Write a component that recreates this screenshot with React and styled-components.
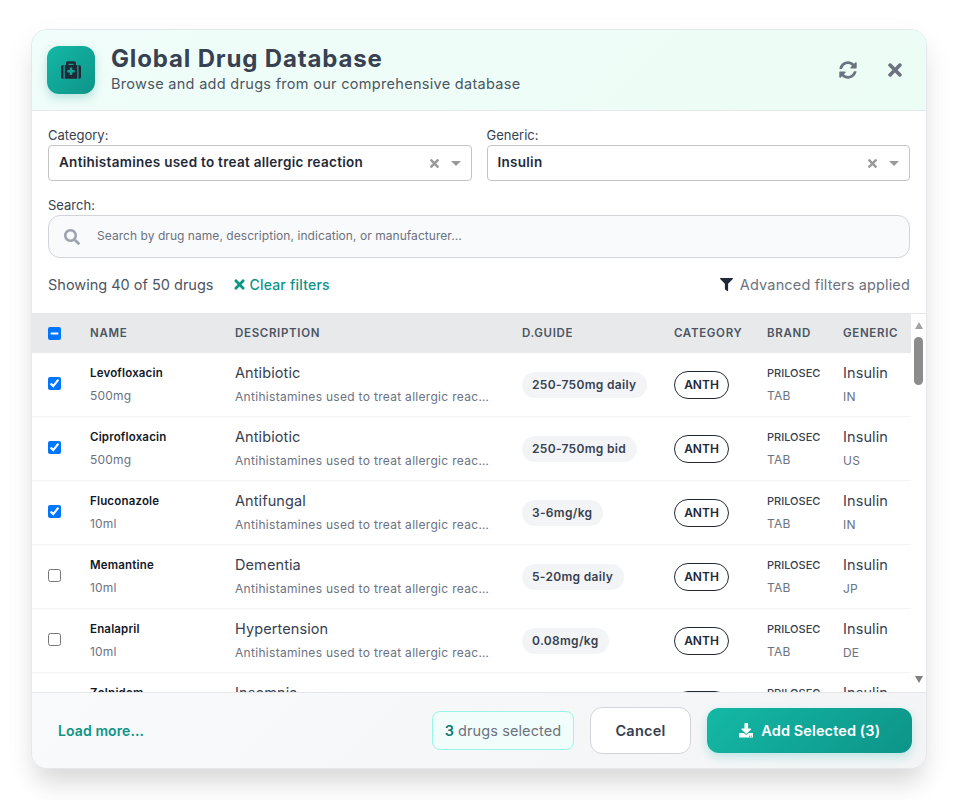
import React, { useEffect, useRef } from "react";
import styled, { createGlobalStyle } from "styled-components";
import { FaMedkit, FaSyncAlt, FaTimes, FaSearch, FaFilter, FaDownload } from "react-icons/fa";

const GlobalStyle = createGlobalStyle`
  * { box-sizing: border-box; }
  body {
    margin: 0;
    background: #fff;
    font-family: Inter, "Liberation Sans", sans-serif;
  }
`;

const Page = styled.div`
  padding: 29px 31px 32px;
`;

const Modal = styled.div`
  height: 740px;
  display: flex;
  flex-direction: column;
  background: #fff;
  border: 1px solid #e5e7eb;
  border-radius: 16px;
  box-shadow: 0 20px 25px -5px rgba(0, 0, 0, 0.1), 0 10px 30px rgba(0, 0, 0, 0.06);
  overflow: hidden;
`;

const Header = styled.div`
  height: 81px;
  flex: none;
  display: flex;
  align-items: center;
  padding: 0 21px 0 15px;
  background: linear-gradient(135deg, #f0fdfa, #ecfdf5);
  border-bottom: 1px solid #e5e7eb;
`;

const IconBox = styled.div`
  width: 48px;
  height: 48px;
  display: flex;
  align-items: center;
  justify-content: center;
  border-radius: 12px;
  color: #1f2937;
  font-size: 20px;
  background: linear-gradient(135deg, #14b8a6, #0d9488);
  box-shadow: 0 4px 10px rgba(13, 148, 136, 0.25);
`;

const HeaderText = styled.div`
  margin-left: 16px;
  padding-bottom: 2px;
  flex: 1;
`;

const Title = styled.h1`
  margin: 0;
  font-size: 24px;
  line-height: 30px;
  font-weight: 700;
  letter-spacing: 0.85px;
  color: #374151;
`;

const Subtitle = styled.p`
  margin: 0;
  font-size: 14.5px;
  line-height: 20px;
  letter-spacing: 0.3px;
  color: #4b5563;
`;

const HeaderButton = styled.button`
  border: none;
  background: none;
  padding: 0;
  margin-left: ${(p) => p.$gap}px;
  display: flex;
  color: #6b7280;
  font-size: ${(p) => p.$size}px;
`;

const Filters = styled.div`
  flex: none;
  padding: 16px 16px 0;
`;

const SelectRow = styled.div`
  display: grid;
  grid-template-columns: 1fr 1fr;
  gap: 15px;
  margin-bottom: 16px;
`;

const Label = styled.label`
  display: block;
  margin-bottom: 2px;
  font-size: 13px;
  line-height: 16px;
  color: #374151;
`;

const Select = styled.div`
  height: 36px;
  display: flex;
  align-items: center;
  padding: 0 10px;
  border: 1px solid #c4c4c4;
  border-radius: 4px;
  background: #fff;
`;

const SelectValue = styled.span`
  flex: 1;
  padding-bottom: 2px;
  font-size: 13.5px;
  font-weight: 600;
  letter-spacing: 0.28px;
  color: #1f2937;
`;

const SelectClear = styled.span`
  display: flex;
  color: #999;
  font-size: 13px;
  margin-right: 10px;
`;

const SelectArrow = styled.span`
  width: 0;
  height: 0;
  border-left: 5px solid transparent;
  border-right: 5px solid transparent;
  border-top: 5px solid #999;
`;

const SearchBox = styled.div`
  height: 43px;
  display: flex;
  align-items: center;
  padding: 0 15px;
  border: 1px solid #d1d5db;
  border-radius: 12px;
  background: #f9fafb;
  color: #9ca3af;
  font-size: 16px;
`;

const SearchInput = styled.input`
  flex: 1;
  margin-left: 17px;
  padding: 0 0 2px;
  border: none;
  outline: none;
  background: none;
  font: inherit;
  font-size: 12px;
  letter-spacing: 0.05px;

  &::placeholder {
    color: #6b7280;
    opacity: 1;
  }
`;

const StatusRow = styled.div`
  flex: none;
  height: 55px;
  display: flex;
  align-items: center;
  padding: 0 16px 2px;
  font-size: 14.5px;
`;

const Showing = styled.span`
  color: #4b5563;
`;

const ClearLink = styled.a`
  display: flex;
  align-items: center;
  gap: 2px;
  margin-left: 19px;
  color: #0d9488;
  font-weight: 500;
  font-size: 14px;
  letter-spacing: 0.2px;
  & svg { font-size: 15px; }
`;

const Advanced = styled.span`
  display: flex;
  align-items: center;
  gap: 7px;
  margin-left: auto;
  color: #6b7280;
  letter-spacing: 0.15px;
  & svg { color: #1f2937; font-size: 13px; }
`;

const TableArea = styled.div`
  flex: 1;
  min-height: 0;
  display: flex;
  border-top: 1px solid #e5e7eb;
`;

const TableScroll = styled.div`
  flex: 1;
  min-width: 0;
  overflow-y: auto;
  scrollbar-width: none;
`;

const ScrollRail = styled.div`
  flex: none;
  width: 15px;
  display: flex;
  flex-direction: column;
  align-items: center;
  padding: 8px 0 9px;
  background: #fff;
`;

const ArrowUp = styled.span`
  width: 0;
  height: 0;
  border-left: 4.5px solid transparent;
  border-right: 4.5px solid transparent;
  border-bottom: 7px solid #a3a3a3;
`;

const ArrowDown = styled.span`
  width: 0;
  height: 0;
  margin-top: auto;
  border-left: 4.5px solid transparent;
  border-right: 4.5px solid transparent;
  border-top: 7px solid #808080;
`;

const Thumb = styled.div`
  width: 9px;
  height: 48px;
  margin-top: 8px;
  border-radius: 4.5px;
  background: #8c8c8c;
`;

const Table = styled.table`
  width: 100%;
  table-layout: fixed;
  border-collapse: separate;
  border-spacing: 0;
`;

const Th = styled.th`
  position: sticky;
  top: 0;
  z-index: 1;
  height: 39px;
  padding: 0 0 1px 16px;
  text-align: left;
  background: #e8e9eb;
  font-size: 11.5px;
  font-weight: 600;
  letter-spacing: 0.68px;
  color: #4b5563;
`;

const Td = styled.td`
  height: 64px;
  padding: 0 0 0 16px;
  border-bottom: 1px solid #f3f4f6;
  overflow: hidden;
`;

const Check = styled.input`
  display: block;
  margin: 0 0 3px;
  width: 13px;
  height: 13px;
`;

const HeadCheck = styled(Check)`
  margin: 0;
`;

const Stack = styled.div`
  display: flex;
  flex-direction: column;
  gap: 7px;
`;

const DrugName = styled.div`
  font-size: 11.5px;
  line-height: 16px;
  font-weight: 600;
  letter-spacing: 0.18px;
  color: #111827;
`;

const SubLine = styled.div`
  font-size: 12px;
  line-height: 16px;
  color: #6b7280;
  letter-spacing: 0.2px;
`;

const Indication = styled.div`
  margin-bottom: 1px;
  font-size: 14.5px;
  line-height: 16px;
  font-weight: 400;
  letter-spacing: 0.1px;
  color: #374151;
`;

const Description = styled.div`
  font-size: 12px;
  line-height: 16px;
  letter-spacing: 0.3px;
  color: #6b7280;
  white-space: nowrap;
  overflow: hidden;
  text-overflow: ellipsis;
  max-width: 255px;
`;

const Dose = styled.span`
  display: inline-block;
  padding: 0 11px 0 10px;
  height: 26px;
  line-height: 26px;
  border-radius: 13px;
  background: #f3f4f6;
  color: #374151;
  font-size: 12px;
  font-weight: 600;
  letter-spacing: 0.32px;
  white-space: nowrap;
`;

const Tag = styled.span`
  display: inline-block;
  width: 55px;
  height: 28px;
  line-height: 26px;
  text-align: center;
  border: 1px solid #1f2937;
  border-radius: 14px;
  color: #1f2937;
  font-size: 12px;
  font-weight: 600;
`;

const Brand = styled.div`
  font-size: 11px;
  line-height: 16px;
  font-weight: 500;
  color: #374151;
`;

const Footer = styled.div`
  flex: none;
  height: 76px;
  display: flex;
  align-items: center;
  padding: 0 14px 0 26px;
  background: linear-gradient(135deg, #f9fafb, #f3f4f6);
  border-top: 1px solid #e5e7eb;
`;

const LoadMore = styled.a`
  margin-right: auto;
  color: #0d9488;
  font-size: 14px;
  font-weight: 600;
  letter-spacing: 0.1px;
`;

const SelectedCount = styled.div`
  height: 39px;
  width: 142px;
  margin-right: 16px;
  display: flex;
  align-items: center;
  justify-content: center;
  gap: 4px;
  border: 1px solid #99f6e4;
  border-radius: 8px;
  background: #f0fdfa;
  color: #6b7280;
  font-size: 14.5px;
  letter-spacing: 0.1px;
  & b { color: #0f766e; font-weight: 600; }
`;

const CancelButton = styled.button`
  width: 101px;
  height: 47px;
  margin-right: 16px;
  border: 1px solid #d1d5db;
  border-radius: 12px;
  background: #fff;
  color: #374151;
  font: inherit;
  font-size: 14.5px;
  font-weight: 600;
  letter-spacing: 0.25px;
`;

const AddButton = styled.button`
  width: 205px;
  height: 45px;
  display: flex;
  align-items: center;
  justify-content: center;
  gap: 8px;
  border: none;
  border-radius: 12px;
  background: linear-gradient(135deg, #14b8a6, #0d9488);
  box-shadow: 0 4px 10px rgba(20, 184, 166, 0.25);
  color: #fff;
  font: inherit;
  font-size: 14.5px;
  font-weight: 600;
  letter-spacing: 0.1px;
`;

const DRUGS = [
  { name: "Levofloxacin", dose: "500mg", use: "Antibiotic", guide: "250-750mg daily", country: "IN", checked: true },
  { name: "Ciprofloxacin", dose: "500mg", use: "Antibiotic", guide: "250-750mg bid", country: "US", checked: true },
  { name: "Fluconazole", dose: "10ml", use: "Antifungal", guide: "3-6mg/kg", country: "IN", checked: true },
  { name: "Memantine", dose: "10ml", use: "Dementia", guide: "5-20mg daily", country: "JP" },
  { name: "Enalapril", dose: "10ml", use: "Hypertension", guide: "0.08mg/kg", country: "DE" },
  { name: "Zolpidem", dose: "10ml", use: "Insomnia", guide: "5-10mg", country: "US" },
];

// 40 rows are loaded, the rest sits below the fold
const ROWS = Array.from({ length: 40 }, (_, i) => (i < 6 ? DRUGS[i] : { ...DRUGS[i % 6], checked: false }));

const COLUMNS = [42, 145, 287, 152, 93, 76];

function HeaderCheck() {
  const ref = useRef(null);
  useEffect(() => {
    ref.current.indeterminate = true;
  }, []);
  return <HeadCheck ref={ref} type="checkbox" />;
}

export default function App() {
  return (
    <Page>
      <GlobalStyle />
      <Modal>
        <Header>
          <IconBox>
            <FaMedkit />
          </IconBox>
          <HeaderText>
            <Title>Global Drug Database</Title>
            <Subtitle>Browse and add drugs from our comprehensive database</Subtitle>
          </HeaderText>
          <HeaderButton $size={18} $gap={0}>
            <FaSyncAlt />
          </HeaderButton>
          <HeaderButton $size={20} $gap={28}>
            <FaTimes />
          </HeaderButton>
        </Header>

        <Filters>
          <SelectRow>
            <div>
              <Label>Category:</Label>
              <Select>
                <SelectValue>Antihistamines used to treat allergic reaction</SelectValue>
                <SelectClear>
                  <FaTimes />
                </SelectClear>
                <SelectArrow />
              </Select>
            </div>
            <div>
              <Label>Generic:</Label>
              <Select>
                <SelectValue>Insulin</SelectValue>
                <SelectClear>
                  <FaTimes />
                </SelectClear>
                <SelectArrow />
              </Select>
            </div>
          </SelectRow>
          <Label>Search:</Label>
          <SearchBox>
            <FaSearch />
            <SearchInput placeholder="Search by drug name, description, indication, or manufacturer..." />
          </SearchBox>
        </Filters>

        <StatusRow>
          <Showing>Showing 40 of 50 drugs</Showing>
          <ClearLink>
            <FaTimes />
            Clear filters
          </ClearLink>
          <Advanced>
            <FaFilter />
            Advanced filters applied
          </Advanced>
        </StatusRow>

        <TableArea>
          <TableScroll>
            <Table>
              <colgroup>
                {COLUMNS.map((w) => (
                  <col key={w} width={w} />
                ))}
                <col />
              </colgroup>
              <thead>
                <tr>
                  <Th>
                    <HeaderCheck />
                  </Th>
                  <Th>NAME</Th>
                  <Th>DESCRIPTION</Th>
                  <Th>D.GUIDE</Th>
                  <Th>CATEGORY</Th>
                  <Th>BRAND</Th>
                  <Th>GENERIC</Th>
                </tr>
              </thead>
              <tbody>
                {ROWS.map((drug, i) => (
                  <tr key={i}>
                    <Td>
                      <Check type="checkbox" defaultChecked={drug.checked} />
                    </Td>
                    <Td>
                      <Stack>
                        <DrugName>{drug.name}</DrugName>
                        <SubLine>{drug.dose}</SubLine>
                      </Stack>
                    </Td>
                    <Td>
                      <Stack>
                        <Indication>{drug.use}</Indication>
                        <Description>Antihistamines used to treat allergic reaction</Description>
                      </Stack>
                    </Td>
                    <Td>
                      <Dose>{drug.guide}</Dose>
                    </Td>
                    <Td>
                      <Tag>ANTH</Tag>
                    </Td>
                    <Td>
                      <Stack>
                        <Brand>PRILOSEC</Brand>
                        <SubLine>TAB</SubLine>
                      </Stack>
                    </Td>
                    <Td>
                      <Stack>
                        <Indication>Insulin</Indication>
                        <SubLine>{drug.country}</SubLine>
                      </Stack>
                    </Td>
                  </tr>
                ))}
              </tbody>
            </Table>
          </TableScroll>
          <ScrollRail>
            <ArrowUp />
            <Thumb />
            <ArrowDown />
          </ScrollRail>
        </TableArea>

        <Footer>
          <LoadMore>Load more...</LoadMore>
          <SelectedCount>
            <b>3</b> drugs selected
          </SelectedCount>
          <CancelButton>Cancel</CancelButton>
          <AddButton>
            <FaDownload />
            Add Selected (3)
          </AddButton>
        </Footer>
      </Modal>
    </Page>
  );
}
